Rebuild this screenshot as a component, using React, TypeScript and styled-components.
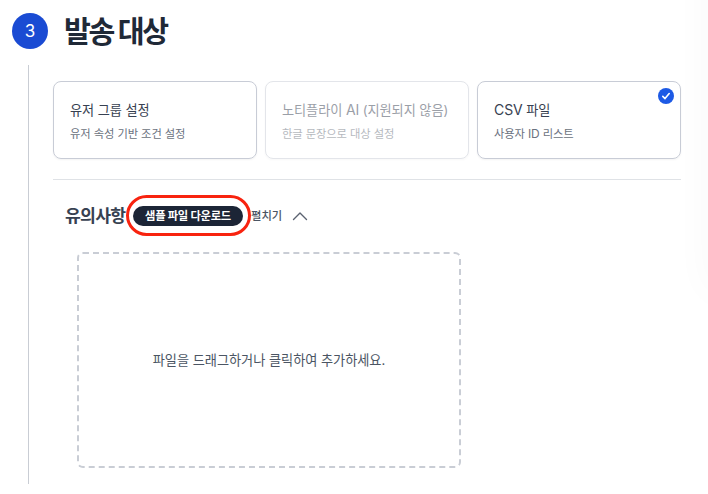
import React from "react";
import styled, { createGlobalStyle } from "styled-components";

const GlobalStyle = createGlobalStyle`
  * { box-sizing: border-box; }
  body {
    margin: 0;
    background: #fff;
    font-family: Inter, "Noto Sans CJK KR", sans-serif;
    overflow: hidden;
  }
  h2, h3, p { margin: 0; }
`;

const Page = styled.main`
  position: relative;
  width: 708px;
  height: 494px;
  padding: 13px 27px 10px 12px;
  overflow: hidden;
  display: flex;
  flex-direction: column;
`;

const PanelShadow = styled.div`
  position: absolute;
  left: 100%;
  top: -60px;
  width: 100px;
  height: 350px;
  box-shadow: 0 0 40px rgba(0, 0, 0, 0.03);
`;

const StepHeader = styled.header`
  display: flex;
  align-items: center;
  gap: 16px;
  height: 36px;
`;

const StepNumber = styled.span`
  width: 36px;
  height: 36px;
  border-radius: 50%;
  background: #1a4bd3;
  color: #fff;
  display: grid;
  place-items: center;
  font-size: 17px;
`;

const StepTitle = styled.h2`
  padding-top: 2px;
  color: #1f2937;
  font-size: 29.2px;
  line-height: 36px;
  font-weight: 700;
  letter-spacing: -2.3px;
  white-space: nowrap;
`;

const StepBody = styled.section`
  flex: 1;
  margin: 16px 0 0 16px;
  padding: 16px 0 0 24px;
  border-left: 1px solid #c9cdd4;
`;

const CardGrid = styled.div`
  display: grid;
  grid-template-columns: repeat(3, 204px);
  gap: 8px;
  padding-bottom: 20px;
  border-bottom: 1px solid #dfe2e6;
  width: 628px;
`;

const Card = styled.div<{ $disabled?: boolean }>`
  position: relative;
  height: 78px;
  padding: 18px 16px 0;
  border: 1px solid #c8ccd6;
  border-radius: 8px;
  box-shadow: 0 1px 2px rgba(0, 0, 0, 0.05);
  opacity: ${(p) => (p.$disabled ? 0.5 : 1)};
  white-space: nowrap;
`;

const CardTitle = styled.p`
  color: #374151;
  font-size: 13.2px;
  line-height: 20px;
  letter-spacing: -0.08px;
`;

const CardText = styled.p`
  margin-top: 5px;
  color: #6b7280;
  font-size: 11.3px;
  line-height: 18px;
  letter-spacing: -0.09px;
`;

const Latin = styled.span`
  font-size: 1.06em;
  line-height: 1;
`;

const CheckBadge = styled.svg`
  position: absolute;
  top: 6px;
  right: 6px;
`;

const NoticeBar = styled.div`
  display: flex;
  align-items: center;
  height: 40px;
  margin: 16px 0 0 12px;
  white-space: nowrap;
`;

const NoticeTitle = styled.h3`
  width: 61px;
  color: #374151;
  font-size: 17.2px;
  line-height: 28px;
  font-weight: 700;
  letter-spacing: -0.75px;
`;

const Highlight = styled.div`
  flex: none;
  width: 125px;
  height: 41px;
  margin-bottom: 1px;
  padding: 8px 0 0 4px;
  border: 3px solid #f8230f;
  border-radius: 21px;
`;

const DownloadButton = styled.button`
  display: block;
  width: 110px;
  height: 20px;
  padding: 0;
  border: 0;
  border-radius: 10px;
  background: #1c2536;
  color: #fff;
  font: 700 11.3px/20px Inter, "Noto Sans CJK KR", sans-serif;
  letter-spacing: -0.25px;
`;

const Toggle = styled.span`
  display: flex;
  align-items: center;
  gap: 10px;
  color: #4b5563;
  font-size: 11.3px;
  line-height: 18px;
  font-weight: 500;
`;

const DropZone = styled.div`
  display: grid;
  place-items: center;
  width: 384px;
  height: 216px;
  margin: 16px 0 0 24px;
  border: 2px dashed #c9cdd5;
  border-radius: 6px;
`;

const DropText = styled.p`
  color: #4b5563;
  font-size: 13.2px;
  line-height: 20px;
  letter-spacing: -0.04px;
`;

export default function App() {
  return (
    <>
      <GlobalStyle />
      <Page>
        <StepHeader>
          <StepNumber>3</StepNumber>
          <StepTitle>발송 대상</StepTitle>
        </StepHeader>
        <StepBody>
          <CardGrid>
            <Card>
              <CardTitle>유저 그룹 설정</CardTitle>
              <CardText>유저 속성 기반 조건 설정</CardText>
            </Card>
            <Card $disabled>
              <CardTitle>노티플라이 <Latin>AI</Latin> (지원되지 않음)</CardTitle>
              <CardText>한글 문장으로 대상 설정</CardText>
            </Card>
            <Card>
              <CardTitle><Latin>CSV</Latin> 파일</CardTitle>
              <CardText>사용자 <Latin>ID</Latin> 리스트</CardText>
              <CheckBadge width="16" height="16" viewBox="0 0 16 16" fill="none">
                <circle cx="8" cy="8" r="8" fill="#1d5ae5" />
                <path d="M4.8 8.4 7 10.6 11.2 5.5" stroke="#fff" strokeWidth="1.6" strokeLinecap="round" strokeLinejoin="round" />
              </CheckBadge>
            </Card>
          </CardGrid>
          <NoticeBar>
            <NoticeTitle>유의사항</NoticeTitle>
            <Highlight>
              <DownloadButton>샘플 파일 다운로드</DownloadButton>
            </Highlight>
            <Toggle>
              펼치기
              <svg width="16" height="10" viewBox="0 0 16 10" fill="none">
                <path d="M1.5 8.5 8 2l6.500 6.500" stroke="#5a6270" strokeWidth="1.4" strokeLinecap="round" strokeLinejoin="round" />
              </svg>
            </Toggle>
          </NoticeBar>
          <DropZone>
            <DropText>파일을 드래그하거나 클릭하여 추가하세요.</DropText>
          </DropZone>
        </StepBody>
        <PanelShadow />
      </Page>
    </>
  );
}
